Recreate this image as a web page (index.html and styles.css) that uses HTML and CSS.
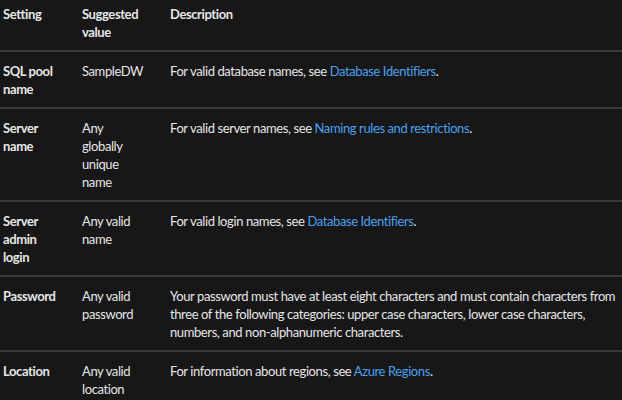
FILE: index.html
```html
<!DOCTYPE html>
<html lang="en">
<head>
<meta charset="utf-8">
<title>Settings</title>
<link rel="stylesheet" href="styles.css">
</head>
<body>
<table class="settings">
  <colgroup>
    <col class="c1">
    <col class="c2">
    <col class="c3">
  </colgroup>
  <thead>
    <tr>
      <th>Setting</th>
      <th class="val">Suggested value</th>
      <th class="desc">Description</th>
    </tr>
  </thead>
  <tbody>
    <tr>
      <td class="name">SQL pool name</td>
      <td class="val">SampleDW</td>
      <td class="desc">For valid database names, see <a href="#">Database Identifiers</a>.</td>
    </tr>
    <tr>
      <td class="name">Server name</td>
      <td class="val">Any globally unique name</td>
      <td class="desc">For valid server names, see <a href="#">Naming rules and restrictions</a>.</td>
    </tr>
    <tr>
      <td class="name">Server admin login</td>
      <td class="val">Any valid name</td>
      <td class="desc">For valid login names, see <a href="#">Database Identifiers</a>.</td>
    </tr>
    <tr>
      <td class="name">Password</td>
      <td class="val">Any valid password</td>
      <td class="desc">Your password must have at least eight characters and must contain characters from three of the following categories: upper case characters, lower case characters, numbers, and non-alphanumeric characters.</td>
    </tr>
    <tr>
      <td class="name">Location</td>
      <td class="val">Any valid location</td>
      <td class="desc">For information about regions, see <a href="#">Azure Regions</a>.</td>
    </tr>
  </tbody>
</table>
</body>
</html>
```
FILE: styles.css
```css
html, body {
  margin: 0;
  padding: 0;
  background: #171717;
}
body {
  font-family: Lato, sans-serif;
  font-size: 13px;
  line-height: 18px;
  letter-spacing: -0.4px;
  color: #e6e6e6;
  overflow: hidden;
}
.settings {
  width: 622px;
  border-collapse: collapse;
  table-layout: fixed;
  margin-top: -5px;
}
.c1 { width: 79px; }
.c2 { width: 88px; }
.settings th,
.settings td {
  text-align: left;
  vertical-align: top;
  padding: 10px 14px 9px 3px;
}
.settings .val {
  padding-right: 25px;
}
.settings .desc {
  padding-right: 4px;
}
.settings th {
  font-weight: 700;
}
.settings tr {
  border-bottom: 2px solid #3a3a3a;
}
.settings tbody tr:last-child {
  border-bottom: none;
}
.settings td.name {
  font-weight: 700;
}
.settings a {
  color: #4ba0ee;
  text-decoration: none;
}
```
